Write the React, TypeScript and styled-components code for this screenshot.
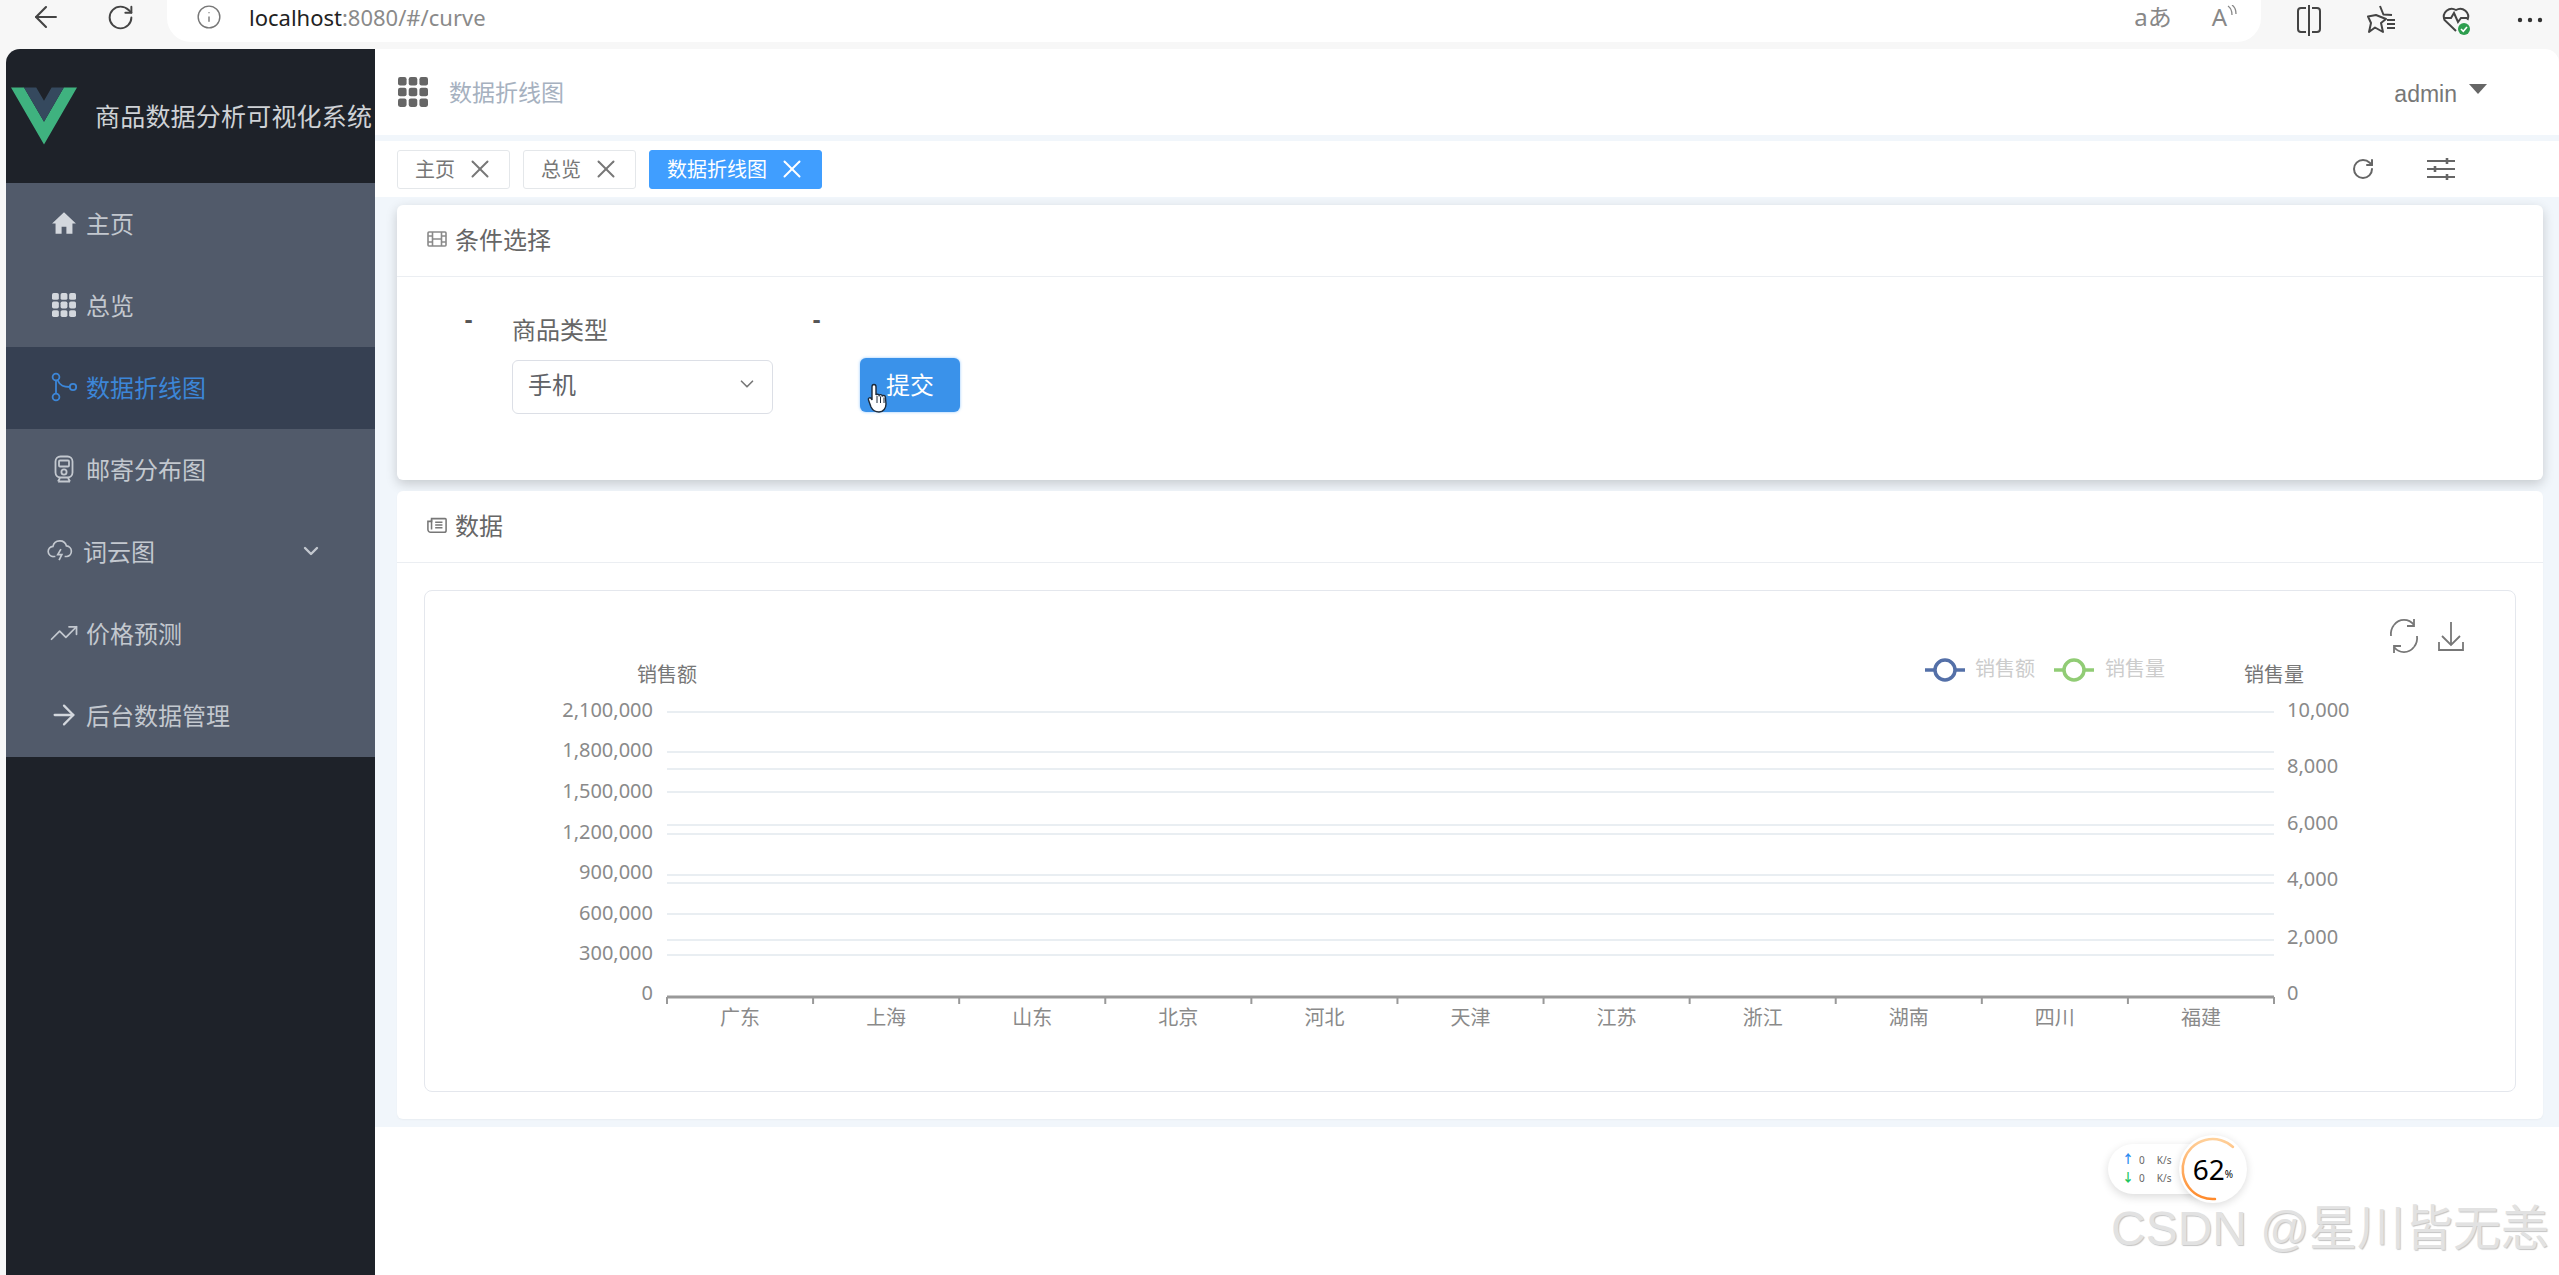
import React from 'react';
import styled, { createGlobalStyle } from 'styled-components';
import { ArrowLeft, ArrowRight, ChevronDown, Info, RotateCw, TrendingUp, X } from 'lucide-react';

const FONT = '"Noto Sans", "Noto Sans CJK SC", "Liberation Sans", sans-serif';

const GlobalStyle = createGlobalStyle`
  html, body {
    margin: 0;
    padding: 0;
    width: 2559px;
    height: 1275px;
    overflow: hidden;
    background: #f7f7f7;
    font-family: ${FONT};
  }
  * { box-sizing: border-box; }
`;

const Page = styled.div`
  position: relative;
  width: 2559px;
  height: 1275px;
  display: flex;
  flex-direction: column;
`;

/* browser chrome */
const BrowserBar = styled.div`
  height: 49px;
  flex: none;
  display: flex;
  align-items: flex-start;
  background: #f7f7f7;
  color: #444;
`;

const NavButton = styled.div<{ $left: number }>`
  width: 34px;
  height: 34px;
  margin-left: ${p => p.$left}px;
  display: flex;
  align-items: center;
  justify-content: center;
`;

const AddressPill = styled.div`
  width: 2094px;
  height: 42px;
  margin-left: 30px;
  padding: 0 0 8px 29px;
  background: #fff;
  border-radius: 0 0 24px 24px;
  display: flex;
  align-items: center;
  font-size: 22px;
  color: #8a8a8a;
`;

const Host = styled.span`
  color: #222;
  margin-left: 27px;
`;

const PillRight = styled.div`
  margin-left: auto;
  display: flex;
  align-items: center;
  gap: 40px;
  padding-right: 24px;
  color: #888;
`;

const ReadIcon = styled.span`
  display: flex;
  align-items: flex-start;
  font-size: 24px;
  line-height: 1;
  color: #888;
`;

const BrowserTools = styled.div`
  flex: 1;
  height: 40px;
  display: flex;
  align-items: center;
  padding-left: 33px;
  gap: 43px;
`;

/* app shell */
const Body = styled.div`
  flex: 1;
  display: flex;
  padding-left: 6px;
  min-height: 0;
`;

const Sidebar = styled.aside`
  width: 369px;
  flex: none;
  background: #1e2229;
  border-radius: 14px 0 0 0;
  overflow: hidden;
`;

const Brand = styled.div`
  height: 134px;
  display: flex;
  align-items: center;
  padding-left: 5px;
  gap: 18px;
`;

const BrandTitle = styled.div`
  font-size: 25px;
  letter-spacing: 0.2px;
  color: #cfd2d6;
  white-space: nowrap;
  padding-bottom: 2px;
`;

const Menu = styled.nav`
  background: #515a6a;
`;

const MenuItem = styled.div<{ $active?: boolean; $tight?: boolean }>`
  height: 82px;
  display: flex;
  align-items: center;
  padding: 0 0 3px ${p => (p.$tight ? 40 : 44)}px;
  gap: ${p => (p.$tight ? 9 : 8)}px;
  font-size: 24px;
  color: ${p => (p.$active ? '#3c86d8' : '#c3c8cf')};
  background: ${p => (p.$active ? '#364052' : 'transparent')};
`;

const MenuIcon = styled.span`
  width: 28px;
  height: 28px;
  flex: none;
  display: flex;
  align-items: center;
  justify-content: center;
  & > svg { flex: none; }
`;

const MenuChevron = styled.span`
  margin-left: auto;
  margin-right: 52px;
  display: flex;
`;

const Main = styled.main`
  flex: 1;
  min-width: 0;
  background: #fff;
  border-radius: 0 14px 0 0;
  overflow: hidden;
`;

const Header = styled.header`
  height: 86px;
  display: flex;
  align-items: center;
  padding: 0 72px 0 23px;
  gap: 21px;
`;

const Breadcrumb = styled.div`
  font-size: 23px;
  color: #a6b1bf;
  padding-bottom: 3px;
`;

const UserMenu = styled.div`
  margin-left: auto;
  display: flex;
  align-items: flex-start;
  gap: 12px;
  font-family: "Liberation Sans", sans-serif;
  font-size: 23px;
  color: #777;
  margin-top: 5px;
`;

const Caret = styled.span`
  width: 0;
  height: 0;
  margin-top: 3px;
  border-left: 9px solid transparent;
  border-right: 9px solid transparent;
  border-top: 10px solid #666;
`;

const TabsBar = styled.div`
  height: 56px;
  margin-top: 6px;
  display: flex;
  align-items: center;
  padding: 0 104px 0 22px;
  gap: 13px;
  background: #fff;
  box-shadow: 0 -6px 0 #f1f6fb;
`;

const Tab = styled.div<{ $active?: boolean }>`
  height: 39px;
  padding: 0 17px 1px 17px;
  display: flex;
  align-items: center;
  gap: 13px;
  font-size: 20px;
  color: ${p => (p.$active ? '#fff' : '#777')};
  background: ${p => (p.$active ? '#409eff' : '#fff')};
  border: 1px solid ${p => (p.$active ? '#409eff' : '#e4e7ea')};
  border-radius: 3px;
`;

const TabClose = styled.span`
  width: 24px;
  display: flex;
  justify-content: center;
  & > svg { flex: none; }
`;

const TabTools = styled.div`
  margin-left: auto;
  display: flex;
  align-items: center;
  gap: 52px;
  color: #666;
`;

const Content = styled.div`
  background: #f1f6fb;
  padding: 8px 16px 8px 22px;
  display: flex;
  flex-direction: column;
  gap: 11px;
`;

const Card = styled.section<{ $raised?: boolean }>`
  background: #fff;
  border-radius: 6px;
  box-shadow: ${p => (p.$raised ? '0 4px 12px rgba(0, 0, 0, 0.18)' : '0 1px 2px rgba(0, 0, 0, 0.04)')};
`;

const CardHead = styled.div`
  height: 72px;
  display: flex;
  align-items: center;
  gap: 8px;
  padding: 0 0 4px 30px;
  border-bottom: 1px solid #ebeef2;
  font-size: 24px;
  color: #666;
`;

const FormArea = styled.div`
  height: 203px;
  display: flex;
  align-items: flex-start;
`;

const Dash = styled.div<{ $width: number; $pad?: number }>`
  width: ${p => p.$width}px;
  padding: 27px 0 0 ${p => p.$pad ?? 0}px;
  text-align: center;
  font-size: 24px;
  font-weight: 700;
  line-height: 30px;
  color: #555;
`;

const Field = styled.div`
  width: 261px;
  padding-top: 36px;
`;

const FieldLabel = styled.div`
  font-size: 24px;
  line-height: 34px;
  color: #666;
  margin-bottom: 13px;
`;

const SelectBox = styled.div`
  height: 54px;
  padding: 0 14px 7px 15px;
  display: flex;
  align-items: center;
  justify-content: space-between;
  border: 1px solid #dcdfe6;
  border-radius: 6px;
  font-size: 24px;
  color: #606266;
`;

const SubmitButton = styled.button`
  position: relative;
  width: 100px;
  height: 54px;
  margin-top: 81px;
  padding: 0 0 4px;
  border: none;
  border-radius: 6px;
  background: #3a92ea;
  box-shadow: 0 0 3px rgba(64, 158, 255, 0.6);
  color: #fff;
  font-family: inherit;
  font-size: 24px;
`;

const CursorHand = styled.svg`
  position: absolute;
  left: 7px;
  top: 24px;
`;

const ChartSection = styled.div`
  padding: 27px;
`;

const ChartFrame = styled.div`
  height: 502px;
  border: 1px solid #e4e7ed;
  border-radius: 8px;
  overflow: hidden;
`;

const ChartSvg = styled.svg`
  display: block;
  width: 100%;
  height: 100%;
  font-family: ${FONT};
`;

/* overlays: system widget and watermark */
const SpeedPill = styled.div`
  position: absolute;
  left: 2108px;
  top: 1144px;
  width: 92px;
  height: 50px;
  padding: 7px 0 0 14px;
  background: #fff;
  border-radius: 25px 0 0 25px;
  box-shadow: 0 3px 10px rgba(0, 0, 0, 0.14);
  font-size: 10px;
  line-height: 18px;
  color: #666;
`;

const SpeedRow = styled.div`
  display: flex;
  align-items: center;
  gap: 5px;
`;

const SpeedUnit = styled.span`
  margin-left: 7px;
`;

const Arrow = styled.span<{ $color: string }>`
  color: ${p => p.$color};
  font-weight: 700;
  font-size: 12px;
`;

const Gauge = styled.div`
  position: absolute;
  left: 2179px;
  top: 1135px;
  width: 68px;
  height: 68px;
  display: flex;
  align-items: center;
  justify-content: center;
  background: #fff;
  border-radius: 50%;
  box-shadow: 0 2px 8px rgba(0, 0, 0, 0.14);
  color: #000;
  font-size: 28px;
`;

const GaugeArc = styled.svg`
  position: absolute;
  left: 0;
  top: 0;
`;

const GaugeUnit = styled.span`
  font-size: 10px;
  margin-top: 10px;
`;

const Watermark = styled.div`
  position: absolute;
  left: 2111px;
  top: 1197px;
  font-family: "Liberation Sans", "Noto Sans CJK SC", sans-serif;
  font-size: 48px;
  line-height: 64px;
  white-space: nowrap;
  color: #e2e2e2;
  text-shadow: 1px 1px 1px #c4c4c4;
`;

const DotGrid: React.FC<{ size: number; color: string }> = ({ size, color }) => (
  <svg width={size} height={size} viewBox="0 0 28 28" fill={color}>
    {[0, 1, 2].flatMap(r =>
      [0, 1, 2].map(c => <rect key={`${r}-${c}`} x={c * 10} y={r * 10} width="8" height="8" rx="2" />),
    )}
  </svg>
);

const HomeIcon = () => (
  <svg width="26" height="26" viewBox="0 0 24 24" fill="#d3d7dd">
    <path d="M12 2 1 12.5h3.2V22h5.6v-6.5h4.4V22h5.6v-9.5H23z" />
  </svg>
);

const ShareIcon = () => (
  <svg width="28" height="30" viewBox="0 0 28 30" fill="none" stroke="#3c86d8" strokeWidth="1.8">
    <circle cx="6" cy="5" r="3.4" />
    <circle cx="6" cy="25" r="3.4" />
    <circle cx="23" cy="15" r="3.2" />
    <path d="M6 8.5v13M7.5 8 C10 14 14 15 19.8 15" />
  </svg>
);

const TrainIcon = () => (
  <svg width="24" height="28" viewBox="0 0 24 28" fill="none" stroke="#c3c8cf" strokeWidth="1.8">
    <rect x="3.5" y="1.5" width="17" height="21" rx="5" />
    <rect x="7" y="5.5" width="10" height="6" rx="1" />
    <circle cx="12" cy="17" r="2.6" />
    <path d="M6 26.5h12M8 23l-2 3.5M16 23l2 3.5" />
  </svg>
);

const CloudIcon = () => (
  <svg width="26" height="24" viewBox="0 0 28 26" fill="none" stroke="#c3c8cf" strokeWidth="1.8">
    <path d="M9 19H7a5.5 5.5 0 0 1-.6-11A7.5 7.5 0 0 1 21 7.500 5.800 5.800 0 0 1 21.500 19H19" />
    <path d="M15 11l-3.500 6h4.500l-3 6" />
  </svg>
);

const FilmIcon = () => (
  <svg width="20" height="18" viewBox="0 0 20 18" fill="none" stroke="#8a8a8a" strokeWidth="1.6">
    <rect x="1" y="2" width="18" height="14" rx="1" />
    <path d="M5.500 2v14M14.500 2v14M5.500 9h9M1 6h4.500M1 12h4.500M14.500 6H19M14.500 12H19" />
  </svg>
);

const PaperIcon = () => (
  <svg width="20" height="18" viewBox="0 0 22 18" fill="none" stroke="#777" strokeWidth="1.7">
    <path d="M5 2h15a1 1 0 0 1 1 1v12a2 2 0 0 1-2 2H4a3 3 0 0 1-3-3V5h4z" />
    <path d="M5 3v11M9 6h8M9 9h8M9 12h8" />
  </svg>
);

const SplitIcon = () => (
  <svg width="30" height="34" viewBox="0 0 30 34" fill="none" stroke="#444" strokeWidth="2">
    <path d="M12 5H7a3 3 0 0 0-3 3v18a3 3 0 0 0 3 3h5M18 5h5a3 3 0 0 1 3 3v18a3 3 0 0 1-3 3h-5M15 2v31" />
  </svg>
);

const FavIcon = () => (
  <svg width="30" height="34" viewBox="0 0 30 34" fill="none" stroke="#444" strokeWidth="2" strokeLinejoin="round">
    <path d="M13 3l3.400 8.500L25 12M19 16l-5 4 2 9-8 -4.500L2 29l2-9-3-6.500 8-1.500z" />
    <path d="M20 17h8M20 21h8M20 25h8" />
  </svg>
);

const HeartIcon = () => (
  <svg width="34" height="36" viewBox="0 0 34 36" fill="none">
    <path
      d="M16 29 4.500 18A8 8 0 0 1 16 8a8 8 0 0 1 11.500 10M3 16h8l3-5 4 9 3-4h6"
      stroke="#444"
      strokeWidth="2"
    />
    <circle cx="24" cy="27" r="6" fill="#2e9e4f" />
    <path d="M21 27l2.300 2.300L27 25" stroke="#fff" strokeWidth="1.600" />
  </svg>
);

const DotsIcon = () => (
  <svg width="26" height="6" viewBox="0 0 26 6" fill="#333">
    <circle cx="3" cy="3" r="2.200" />
    <circle cx="13" cy="3" r="2.200" />
    <circle cx="23" cy="3" r="2.200" />
  </svg>
);

const ReadWaves = () => (
  <svg width="10" height="16" viewBox="0 0 10 16" fill="none" stroke="#888" strokeWidth="1.300">
    <path d="M1 1c3 2 4 5 4 9M5 0c3 2 4 5 4 9" />
  </svg>
);

const SlidersIcon = () => (
  <svg width="28" height="24" viewBox="0 0 28 24" fill="none" stroke="#666" strokeWidth="2.200">
    <path d="M0 4h28M0 12h28M0 20h28" />
    <path d="M20 1v6M8 9v6M20 17v6" strokeWidth="2.600" />
  </svg>
);

const VueLogo = () => (
  <svg width="66" height="60" viewBox="0 0 256 221">
    <path d="M204.800 0H256L128 220.800 0 0h50.560L128 132.480 204.800 0z" fill="#3fb27f" />
    <path d="M50.560 0L128 133.120 204.800 0h-47.360L128 51.200 97.920 0H50.560z" fill="#35495e" />
  </svg>
);

const HandCursor = () => (
  <CursorHand width="24" height="32" viewBox="0 0 24 32">
    <path
      d="M7 2.500c1.300 0 2 1 2 2.200V13c.300-1 2.800-1.300 3.200.3.500-1 2.800-1 3.100.6.700-.8 2.900-.6 3.100 1.100l.6 7c0 4-2.500 8-7 8-4.500 0-6.500-2-8-5L1.500 18c-.8-1.800 1.300-3 2.600-1.700L5 18V4.700c0-1.200.8-2.200 2-2.200z"
      fill="#fff"
      stroke="#1c2a3a"
      strokeWidth="1.400"
    />
    <path d="M10 14v7M13.500 14.500V21M17 15.500V21" stroke="#1c2a3a" strokeWidth="1" />
  </CursorHand>
);

const menu = [
  { label: '主页', icon: <HomeIcon /> },
  { label: '总览', icon: <DotGrid size={24} color="#d3d7dd" /> },
  { label: '数据折线图', icon: <ShareIcon />, active: true },
  { label: '邮寄分布图', icon: <TrainIcon /> },
  { label: '词云图', icon: <CloudIcon />, tight: true, chevron: true },
  { label: '价格预测', icon: <TrendingUp size={30} strokeWidth={1.4} color="#c3c8cf" /> },
  { label: '后台数据管理', icon: <ArrowRight size={32} strokeWidth={1.7} color="#d3d7dd" /> },
];

const tabs = [{ label: '主页' }, { label: '总览' }, { label: '数据折线图', active: true }];

const leftTicks = [
  ['2,100,000', 717],
  ['1,800,000', 757],
  ['1,500,000', 798],
  ['1,200,000', 839],
  ['900,000', 879],
  ['600,000', 920],
  ['300,000', 960],
  ['0', 1000],
] as const;

const rightTicks = [
  ['10,000', 717],
  ['8,000', 773],
  ['6,000', 830],
  ['4,000', 886],
  ['2,000', 944],
  ['0', 1000],
] as const;

const gridLines = [712, 752, 769, 792, 825, 834, 875, 883, 914, 940, 955];
const cities = ['广东', '上海', '山东', '北京', '河北', '天津', '江苏', '浙江', '湖南', '四川', '福建'];

const AXIS_LEFT = 667;
const AXIS_RIGHT = 2274;
const AXIS_Y = 997;
const STEP = (AXIS_RIGHT - AXIS_LEFT) / cities.length;

const Chart = () => (
  <ChartSvg viewBox="425 591 2090 500">
    {gridLines.map(y => (
      <line key={y} x1={AXIS_LEFT} x2={AXIS_RIGHT} y1={y} y2={y} stroke="#e9eef2" strokeWidth="2" />
    ))}
    <line x1={AXIS_LEFT} x2={AXIS_RIGHT} y1={AXIS_Y} y2={AXIS_Y} stroke="#999" strokeWidth="3" />
    {Array.from({ length: cities.length + 1 }, (_, i) => (
      <line
        key={i}
        x1={AXIS_LEFT + i * STEP}
        x2={AXIS_LEFT + i * STEP}
        y1={AXIS_Y}
        y2={AXIS_Y + 7}
        stroke="#999"
        strokeWidth="2"
      />
    ))}
    {leftTicks.map(([label, y]) => (
      <text key={label} x="653" y={y} textAnchor="end" fontSize="20" fill="#8a8a8a">
        {label}
      </text>
    ))}
    {rightTicks.map(([label, y]) => (
      <text key={label} x="2287" y={y} fontSize="20" fill="#8a8a8a">
        {label}
      </text>
    ))}
    {cities.map((city, i) => (
      <text key={city} x={AXIS_LEFT + (i + 0.5) * STEP} y="1025" textAnchor="middle" fontSize="20" fill="#8a8a8a">
        {city}
      </text>
    ))}
    <text x="637" y="682" fontSize="20" fill="#777">销售额</text>
    <text x="2244" y="682" fontSize="20" fill="#777">销售量</text>

    <g fill="none" strokeWidth="3.500">
      <path d="M1925 670h40" stroke="#5470a8" />
      <circle cx="1945" cy="670" r="10" fill="#fff" stroke="#5470a8" />
      <path d="M2054 670h40" stroke="#91cc75" />
      <circle cx="2074" cy="670" r="10" fill="#fff" stroke="#91cc75" />
    </g>
    <text x="1975" y="676" fontSize="20" fill="#cccccc">销售额</text>
    <text x="2105" y="676" fontSize="20" fill="#cccccc">销售量</text>

    <g fill="none" stroke="#777" strokeWidth="1.800">
      <path d="M2394 625a13 14 0 0 1 20 0M2414 647a13 14 0 0 1-20 0" />
      <path d="M2394 625a13 14 0 0 0-3 11M2414 647a13 14 0 0 0 3-11" />
      <path d="M2414 619v7h-7M2394 653v-7h7" />
      <path d="M2451 622v23M2442 636l9 9 9-9M2439 642v8h24v-8" />
    </g>
  </ChartSvg>
);

export default function App() {
  return (
    <Page>
      <GlobalStyle />
      <BrowserBar>
        <NavButton $left={29}>
          <ArrowLeft size={34} strokeWidth={1.5} />
        </NavButton>
        <NavButton $left={40}>
          <RotateCw size={29} strokeWidth={1.6} />
        </NavButton>
        <AddressPill>
          <Info size={26} strokeWidth={1.3} color="#777" />
          <Host>localhost</Host>:8080/#/curve
          <PillRight>
            <ReadIcon>aあ</ReadIcon>
            <ReadIcon>
              A
              <ReadWaves />
            </ReadIcon>
          </PillRight>
        </AddressPill>
        <BrowserTools>
          <SplitIcon />
          <FavIcon />
          <HeartIcon />
          <DotsIcon />
        </BrowserTools>
      </BrowserBar>

      <Body>
        <Sidebar>
          <Brand>
            <VueLogo />
            <BrandTitle>商品数据分析可视化系统</BrandTitle>
          </Brand>
          <Menu>
            {menu.map(item => (
              <MenuItem key={item.label} $active={item.active} $tight={item.tight}>
                <MenuIcon>{item.icon}</MenuIcon>
                {item.label}
                {item.chevron && (
                  <MenuChevron>
                    <ChevronDown size={24} strokeWidth={2.4} />
                  </MenuChevron>
                )}
              </MenuItem>
            ))}
          </Menu>
        </Sidebar>

        <Main>
          <Header>
            <DotGrid size={30} color="#666" />
            <Breadcrumb>数据折线图</Breadcrumb>
            <UserMenu>
              admin
              <Caret />
            </UserMenu>
          </Header>

          <TabsBar>
            {tabs.map(tab => (
              <Tab key={tab.label} $active={tab.active}>
                {tab.label}
                <TabClose>
                  <X size={30} strokeWidth={1.6} />
                </TabClose>
              </Tab>
            ))}
            <TabTools>
              <RotateCw size={24} strokeWidth={2} />
              <SlidersIcon />
            </TabTools>
          </TabsBar>

          <Content>
            <Card $raised>
              <CardHead>
                <FilmIcon />
                条件选择
              </CardHead>
              <FormArea>
                <Dash $width={115} $pad={28}>-</Dash>
                <Field>
                  <FieldLabel>商品类型</FieldLabel>
                  <SelectBox>
                    手机
                    <ChevronDown size={22} strokeWidth={1.8} color="#777" />
                  </SelectBox>
                </Field>
                <Dash $width={87}>-</Dash>
                <SubmitButton>
                  提交
                  <HandCursor />
                </SubmitButton>
              </FormArea>
            </Card>

            <Card>
              <CardHead>
                <PaperIcon />
                数据
              </CardHead>
              <ChartSection>
                <ChartFrame>
                  <Chart />
                </ChartFrame>
              </ChartSection>
            </Card>
          </Content>
        </Main>
      </Body>

      <SpeedPill>
        <SpeedRow>
          <Arrow $color="#2d8cf0">↑</Arrow>0<SpeedUnit>K/s</SpeedUnit>
        </SpeedRow>
        <SpeedRow>
          <Arrow $color="#22c55e">↓</Arrow>0<SpeedUnit>K/s</SpeedUnit>
        </SpeedRow>
      </SpeedPill>
      <Gauge>
        <GaugeArc width="68" height="68" viewBox="0 0 68 68" fill="none" strokeWidth="2.500">
          <defs>
            <linearGradient id="gaugeStroke" x1="0" y1="0" x2="0" y2="1">
              <stop offset="0" stopColor="#ffd09a" />
              <stop offset="1" stopColor="#ff8a2b" />
            </linearGradient>
          </defs>
          <path d="M54 12A30 30 0 1 0 36 64" stroke="url(#gaugeStroke)" strokeLinecap="round" />
        </GaugeArc>
        62
        <GaugeUnit>%</GaugeUnit>
      </Gauge>
      <Watermark>CSDN @星川皆无恙</Watermark>
    </Page>
  );
}
